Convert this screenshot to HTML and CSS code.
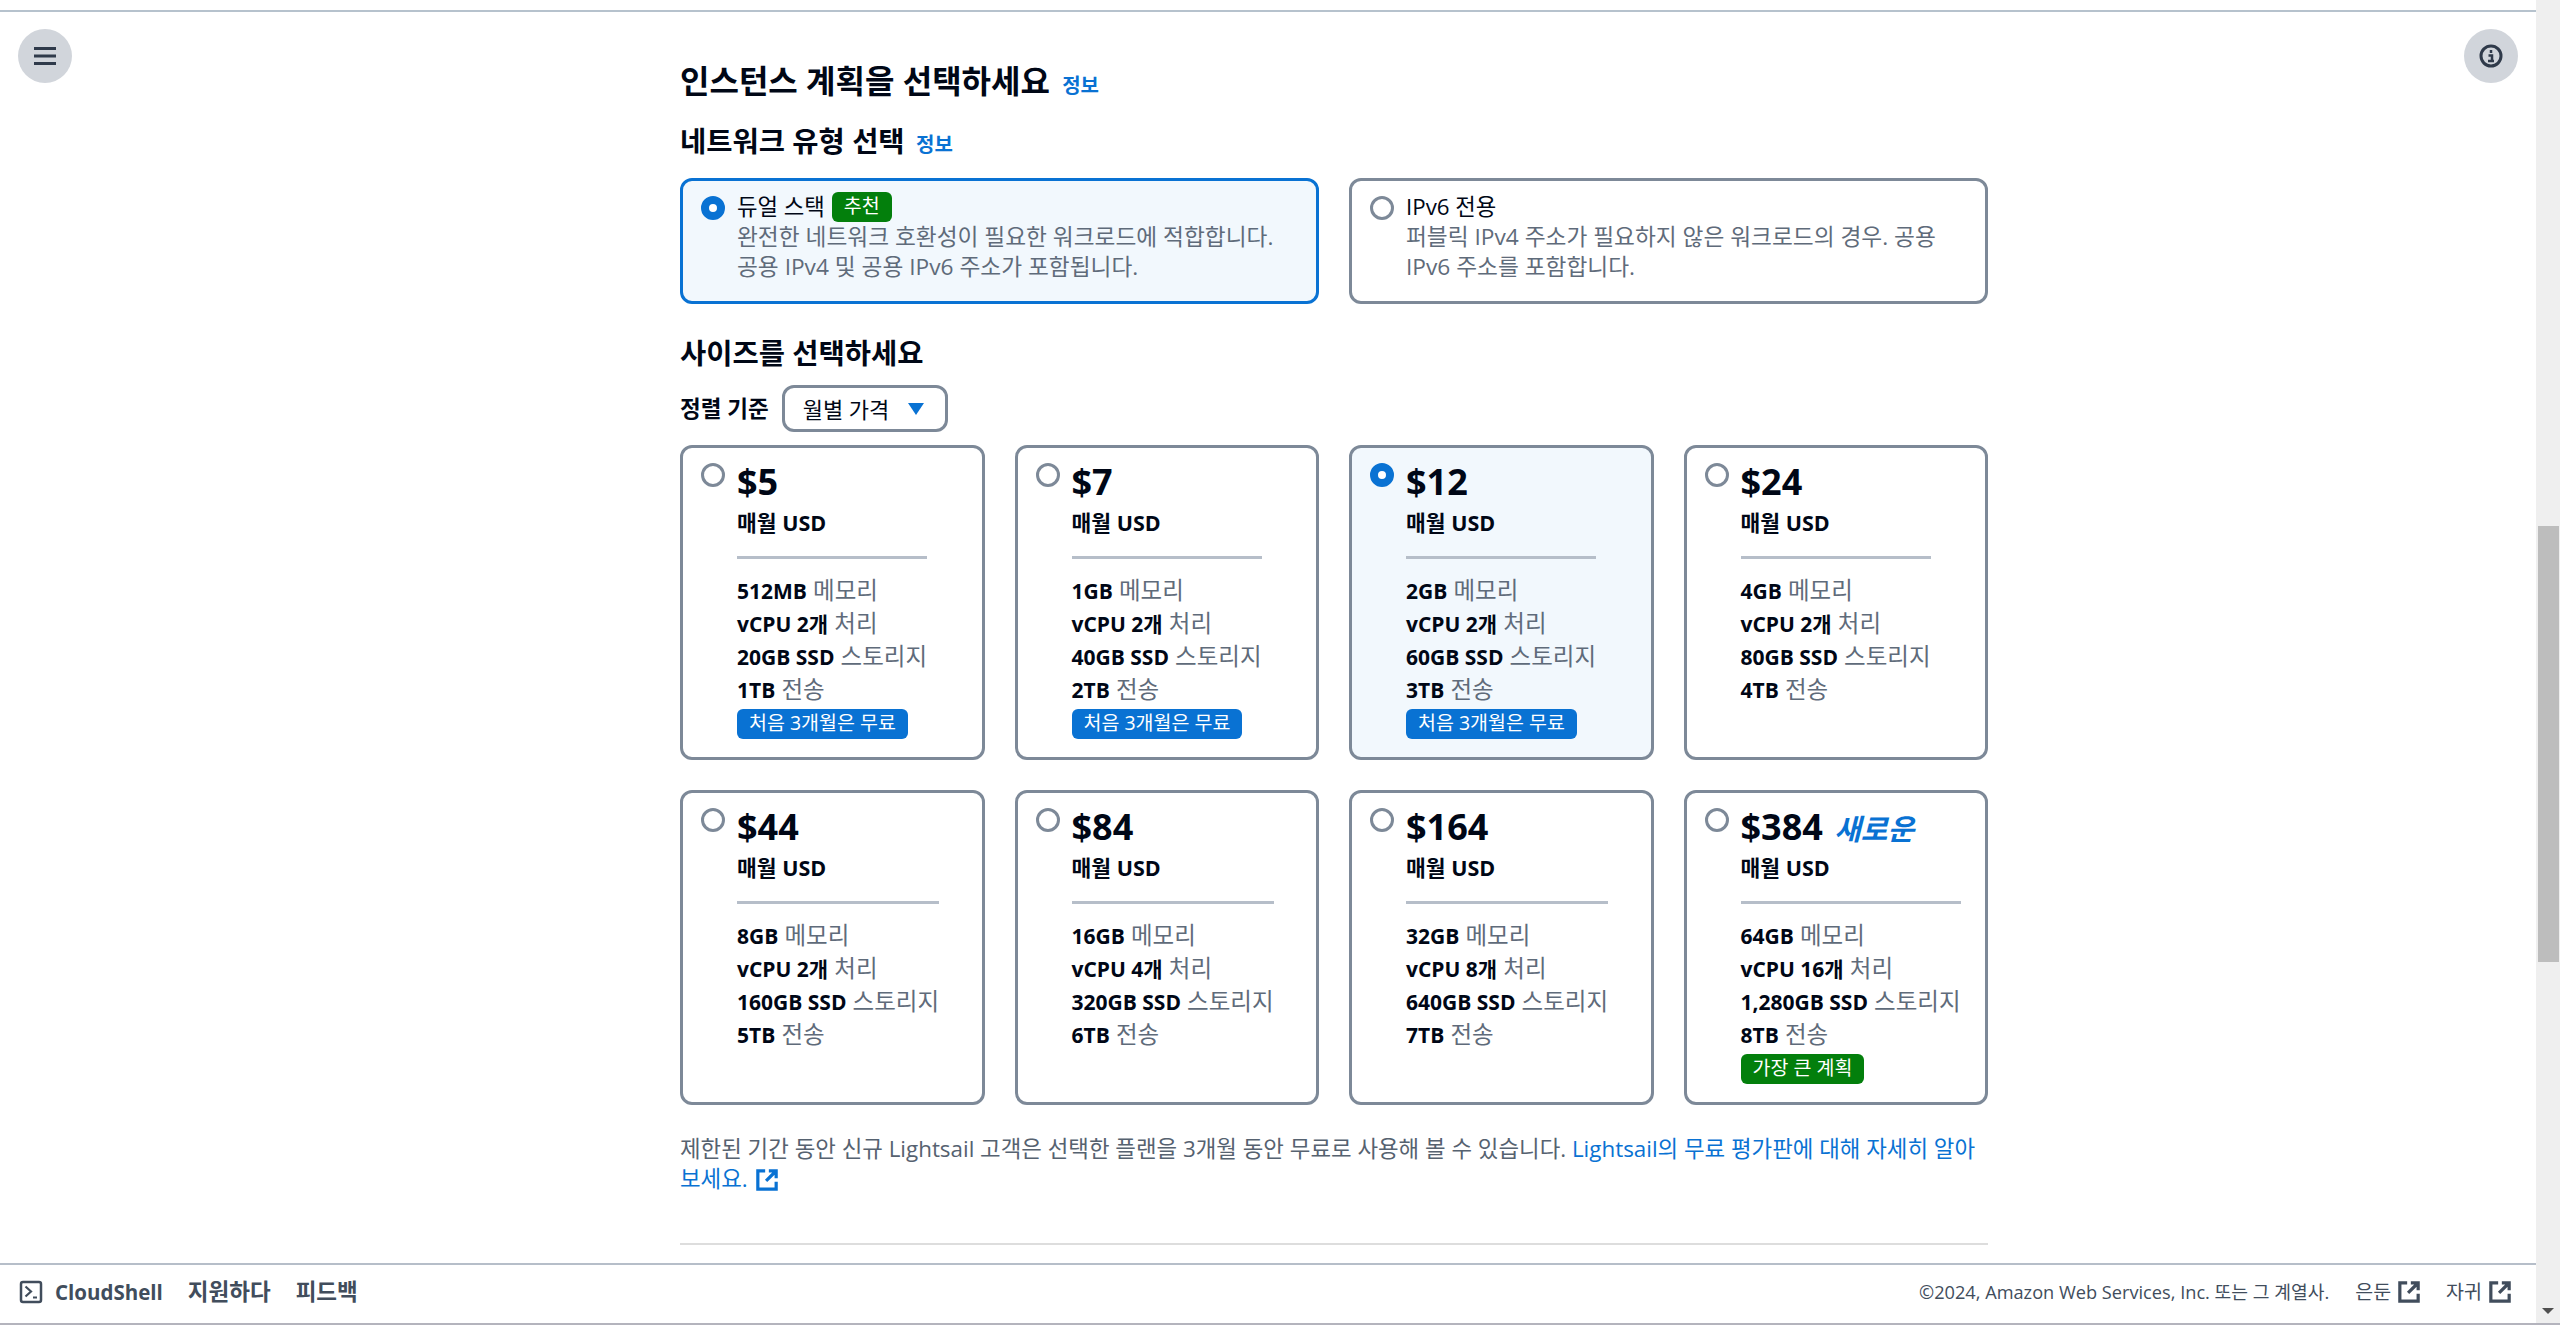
FILE: index.html
```html
<!DOCTYPE html>
<html>
<head>
	<meta charset="utf-8">
	<title>Lightsail</title>
	<link rel="stylesheet" href="styles.css">
</head>
<body>
	<div class="view">
		<div class="page">
			<div class="rail rail-left">
				<button class="round-btn">
					<svg width="24" height="24" viewBox="0 0 24 24"><path d="M1 4.500h22M1 12h22M1 19.500h22" stroke="#2f3a4a" stroke-width="3" fill="none"/></svg>
				</button>
			</div>
			<main class="content">
				<h1 class="title">인스턴스 계획을 선택하세요 <a class="info">정보</a></h1>
				<h2 class="subtitle">네트워크 유형 선택 <a class="info">정보</a></h2>
				<div class="net-grid">
					<div class="net-card selected">
						<span class="radio on"></span>
						<div>
							<div class="net-label">듀얼 스택 <span class="badge green">추천</span></div>
							<div class="net-desc">완전한 네트워크 호환성이 필요한 워크로드에 적합합니다. 공용 IPv4 및 공용 IPv6 주소가 포함됩니다.</div>
						</div>
					</div>
					<div class="net-card">
						<span class="radio"></span>
						<div>
							<div class="net-label">IPv6 전용</div>
							<div class="net-desc">퍼블릭 IPv4 주소가 필요하지 않은 워크로드의 경우. 공용 IPv6 주소를 포함합니다.</div>
						</div>
					</div>
				</div>
				<h2 class="subtitle size-title">사이즈를 선택하세요</h2>
				<div class="sort-row">
					<span class="sort-label">정렬 기준</span>
					<div class="select">월별 가격 <span class="caret"></span></div>
				</div>
				<div class="size-grid">
					<div class="size-card">
						<span class="radio"></span>
						<div class="size-body">
							<div class="price">$5</div>
							<div class="per">매월 USD</div>
							<div class="specs">
								<div><b>512MB</b> 메모리</div>
								<div><b>vCPU 2개</b> 처리</div>
								<div><b>20GB SSD</b> 스토리지</div>
								<div><b>1TB</b> 전송</div>
							</div>
							<span class="badge blue">처음 3개월은 무료</span>
						</div>
					</div>
					<div class="size-card">
						<span class="radio"></span>
						<div class="size-body">
							<div class="price">$7</div>
							<div class="per">매월 USD</div>
							<div class="specs">
								<div><b>1GB</b> 메모리</div>
								<div><b>vCPU 2개</b> 처리</div>
								<div><b>40GB SSD</b> 스토리지</div>
								<div><b>2TB</b> 전송</div>
							</div>
							<span class="badge blue">처음 3개월은 무료</span>
						</div>
					</div>
					<div class="size-card selected">
						<span class="radio on"></span>
						<div class="size-body">
							<div class="price">$12</div>
							<div class="per">매월 USD</div>
							<div class="specs">
								<div><b>2GB</b> 메모리</div>
								<div><b>vCPU 2개</b> 처리</div>
								<div><b>60GB SSD</b> 스토리지</div>
								<div><b>3TB</b> 전송</div>
							</div>
							<span class="badge blue">처음 3개월은 무료</span>
						</div>
					</div>
					<div class="size-card">
						<span class="radio"></span>
						<div class="size-body">
							<div class="price">$24</div>
							<div class="per">매월 USD</div>
							<div class="specs">
								<div><b>4GB</b> 메모리</div>
								<div><b>vCPU 2개</b> 처리</div>
								<div><b>80GB SSD</b> 스토리지</div>
								<div><b>4TB</b> 전송</div>
							</div>
						</div>
					</div>
					<div class="size-card">
						<span class="radio"></span>
						<div class="size-body">
							<div class="price">$44</div>
							<div class="per">매월 USD</div>
							<div class="specs">
								<div><b>8GB</b> 메모리</div>
								<div><b>vCPU 2개</b> 처리</div>
								<div><b>160GB SSD</b> 스토리지</div>
								<div><b>5TB</b> 전송</div>
							</div>
						</div>
					</div>
					<div class="size-card">
						<span class="radio"></span>
						<div class="size-body">
							<div class="price">$84</div>
							<div class="per">매월 USD</div>
							<div class="specs">
								<div><b>16GB</b> 메모리</div>
								<div><b>vCPU 4개</b> 처리</div>
								<div><b>320GB SSD</b> 스토리지</div>
								<div><b>6TB</b> 전송</div>
							</div>
						</div>
					</div>
					<div class="size-card">
						<span class="radio"></span>
						<div class="size-body">
							<div class="price">$164</div>
							<div class="per">매월 USD</div>
							<div class="specs">
								<div><b>32GB</b> 메모리</div>
								<div><b>vCPU 8개</b> 처리</div>
								<div><b>640GB SSD</b> 스토리지</div>
								<div><b>7TB</b> 전송</div>
							</div>
						</div>
					</div>
					<div class="size-card">
						<span class="radio"></span>
						<div class="size-body">
							<div class="price">$384 <em class="new">새로운</em></div>
							<div class="per">매월 USD</div>
							<div class="specs">
								<div><b>64GB</b> 메모리</div>
								<div><b>vCPU 16개</b> 처리</div>
								<div><b>1,280GB SSD</b> 스토리지</div>
								<div><b>8TB</b> 전송</div>
							</div>
							<span class="badge green">가장 큰 계획</span>
						</div>
					</div>
				</div>
				<p class="note">제한된 기간 동안 신규 Lightsail 고객은 선택한 플랜을 3개월 동안 무료로 사용해 볼 수 있습니다. <a class="link">Lightsail의 무료 평가판에 대해 자세히 알아보세요. <svg class="ext" width="22" height="22" viewBox="0 0 24 24"><path d="M10 2H2v20h20v-8M14 2h8v8M21 3L11 13" stroke="#0972d3" stroke-width="3.500" fill="none"/></svg></a></p>
				<hr class="rule">
			</main>
			<div class="rail rail-right">
				<button class="round-btn">
					<svg width="24" height="24" viewBox="0 0 24 24"><circle cx="12" cy="12" r="10" stroke="#2f3a4a" stroke-width="3" fill="none"/><path d="M12 6v3M9.500 11.500H13v5M9 17h6" stroke="#2f3a4a" stroke-width="2.500" fill="none"/></svg>
				</button>
			</div>
		</div>
		<footer class="footer">
			<div class="foot-left">
				<svg width="24" height="24" viewBox="0 0 24 24"><rect x="2" y="2" width="20" height="20" rx="2" stroke="#414d5c" stroke-width="2.500" fill="none"/><path d="M6.500 6.500l5.500 5-5.500 5M14 17.500h4" stroke="#414d5c" stroke-width="2.200" fill="none"/></svg>
				<span class="foot-shell">CloudShell</span>
				<span class="foot-link">지원하다</span>
				<span class="foot-link">피드백</span>
			</div>
			<div class="foot-right">
				<span class="copy">©2024, Amazon Web Services, Inc. 또는 그 계열사.</span>
				<span class="foot-ext">은둔 <svg width="22" height="22" viewBox="0 0 24 24"><path d="M10 2H2v20h20v-8M14 2h8v8M21 3L11 13" stroke="#414d5c" stroke-width="3.500" fill="none"/></svg></span>
				<span class="foot-ext">자귀 <svg width="22" height="22" viewBox="0 0 24 24"><path d="M10 2H2v20h20v-8M14 2h8v8M21 3L11 13" stroke="#414d5c" stroke-width="3.500" fill="none"/></svg></span>
			</div>
		</footer>
	</div>
	<div class="scrollbar">
		<div class="thumb"></div>
		<span class="arrow-down"></span>
	</div>
</body>
</html>
```

FILE: styles.css
```css
html, body{margin: 0;height: 100%;overflow: hidden;}
body{display: flex;font-family: "Open Sans", "Noto Sans CJK KR", sans-serif;font-size: 22.7px;line-height: 30px;color: #000716;background-color: #fff;border-bottom: 2px solid #b4b4bd;box-sizing: border-box;}

.view{flex: 1;min-width: 0;display: flex;flex-direction: column;padding-top: 10px;}
.page{flex: 1;min-height: 0;overflow: hidden;display: grid;grid-template-columns: 680px 1308px 1fr;border-top: 2px solid #b6c2cd;}
.rail{padding-top: 17px;}
.rail-left{padding-left: 18px;}
.rail-right{display: flex;justify-content: flex-end;align-items: flex-start;padding-right: 18px;}
.round-btn{width: 54px;height: 54px;border: 0;border-radius: 50%;background-color: #d1d5db;display: flex;align-items: center;justify-content: center;padding: 0;}

.content{padding-top: 49px;}
.title{font-size: 32px;line-height: 40px;font-weight: 700;margin: 0;}
.subtitle{font-size: 28.500px;line-height: 36px;font-weight: 700;margin: 0;}
.title + .subtitle{margin-top: 17px;}
.info{font-size: 20px;font-weight: 700;color: #0972d3;margin-left: 4px;}

.net-grid{display: grid;grid-template-columns: 1fr 1fr;gap: 30px;margin-top: 15px;}
.net-card{display: flex;gap: 12px;height: 126px;box-sizing: border-box;border: 3px solid #7d8998;border-radius: 12px;padding: 11px 18px;}
.net-desc{color: #5f6b7a;}
.net-label{display: flex;align-items: center;gap: 7px;height: 30px;font-size: 22.300px;}
.selected{border-color: #0972d3;background-color: #f2f8fd;}

.radio{flex: none;width: 24px;height: 24px;box-sizing: border-box;border: 3px solid #7d8998;border-radius: 50%;background-color: #fff;margin-top: 4px;}
.radio.on{border: 8px solid #0972d3;}
.size-card .radio{margin-top: 0;}

.badge{display: inline-block;height: 30px;line-height: 28px;font-size: 19.500px;color: #fff;padding: 0 12px;border-radius: 6px;white-space: nowrap;}
.green{background-color: #037f0c;}
.blue{background-color: #0972d3;}

.size-title{margin-top: 31px;}
.sort-row{display: flex;align-items: center;gap: 13px;margin-top: 14px;}
.sort-label{font-size: 22.500px;font-weight: 700;}
.select{display: flex;align-items: center;justify-content: space-between;width: 166px;height: 47px;box-sizing: border-box;border: 3px solid #7d8998;border-radius: 12px;padding: 0 21px 0 18px;font-size: 22px;}
.caret{width: 0;height: 0;border-left: 8px solid transparent;border-right: 8px solid transparent;border-top: 12px solid #0972d3;}

.size-grid{display: grid;grid-template-columns: repeat(4, 1fr);grid-auto-rows: 315px;gap: 30px;margin-top: 13px;}
.size-card{display: flex;gap: 12px;box-sizing: border-box;border: 3px solid #7d8998;border-radius: 12px;padding: 15px 18px;}
.price{font-size: 36px;line-height: 44px;font-weight: 700;white-space: nowrap;margin-top: -3px;}
.new{font-size: 29px;line-height: 0;font-weight: 700;color: #0972d3;margin-left: 2px;}
.per{font-size: 21.500px;font-weight: 700;line-height: 30px;margin-top: 4px;}
.specs{width: fit-content;border-top: 3px solid #b6bec9;margin-top: 18px;padding-top: 15px;margin-bottom: 1px;}
.specs div{line-height: 33px;font-size: 23.500px;color: #5f6b7a;white-space: nowrap;}
.specs b{color: #000716;font-size: 21px;line-height: 1;font-weight: 700;}

.note{color: #566270;margin: 29px 0 0;font-size: 22.400px;}
.link{color: #0972d3;}
.ext{vertical-align: -4px;margin-left: 2px;}
.rule{border: 0;border-top: 2px solid #dddddd;margin: 49px 0 0;}

.footer{flex: none;height: 60px;box-sizing: border-box;border-top: 2px solid #b6bec9;display: flex;justify-content: space-between;align-items: center;padding: 0 25px 4px 19px;color: #414d5c;background-color: #fff;}
.foot-left{display: flex;align-items: center;font-size: 22.500px;font-weight: 700;}
.foot-shell{margin-left: 12px;font-size: 20.500px;}
.foot-link{margin-left: 25px;}
.foot-right{display: flex;align-items: center;font-size: 18.200px;gap: 26px;}
.foot-ext{display: flex;align-items: center;gap: 7px;font-size: 19.500px;}

.scrollbar{flex: none;width: 24px;display: flex;flex-direction: column;align-items: center;background-color: #efefef;padding-bottom: 9px;box-sizing: border-box;}
.thumb{width: 21px;height: 436px;background-color: #bdbdbd;margin-top: 526px;margin-bottom: auto;margin-left: 1px;}
.arrow-down{width: 0;height: 0;border-left: 6px solid transparent;border-right: 6px solid transparent;border-top: 6px solid #505050;}
```
